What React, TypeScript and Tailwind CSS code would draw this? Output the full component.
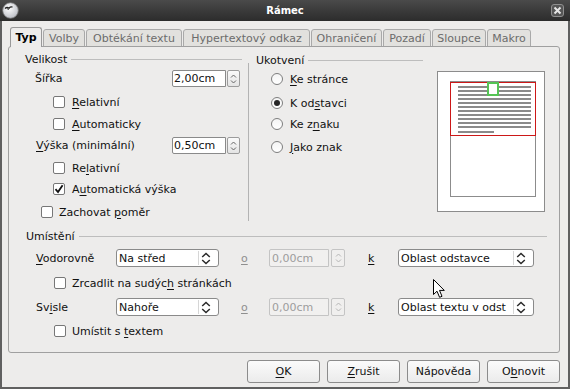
import React from "react";

function U({ children }: { children: React.ReactNode }) {
  return <span className="underline underline-offset-[2px] decoration-1">{children}</span>;
}

function Checkbox({ checked = false }: { checked?: boolean }) {
  return (
    <div className="w-[12px] h-[12px] shrink-0 bg-white border border-[#777777] rounded-[2px] flex items-center justify-center">
      {checked && (
        <svg width="10" height="10" viewBox="0 0 10 10">
          <path d="M1.5 5.2 L4 8 L8.6 1.2" fill="none" stroke="#111" strokeWidth="1.8" />
        </svg>
      )}
    </div>
  );
}

function Radio({ checked = false }: { checked?: boolean }) {
  return (
    <div className="w-[12px] h-[12px] shrink-0 rounded-full bg-gradient-to-b from-[#f4f4f4] to-white border border-[#7e7e7e] flex items-center justify-center">
      {checked && <div className="w-[6px] h-[6px] rounded-full bg-[#262626]" />}
    </div>
  );
}

function SpinArrows({ disabled = false }: { disabled?: boolean }) {
  const c = disabled ? "#b5b5b5" : "#666";
  return (
    <svg width="7" height="12" viewBox="0 0 7 12">
      <path d="M1 4.5 L3.5 2 L6 4.5" fill="none" stroke={c} strokeWidth="1" />
      <path d="M1 7.5 L3.5 10 L6 7.5" fill="none" stroke={c} strokeWidth="1" />
    </svg>
  );
}

function SpinBox({ value }: { value: string }) {
  return (
    <div className="flex h-[17px]">
      <div className="w-[54px] h-full bg-white border border-[#8a8a8a] rounded-l-[2px] flex items-center pl-[1px] leading-none">
        {value}
      </div>
      <div className="ml-[1px] w-[13px] h-full bg-gradient-to-b from-[#fafafa] to-[#e4e4e4] border border-[#9c9c9c] rounded-[2px] flex items-center justify-center">
        <SpinArrows />
      </div>
    </div>
  );
}

function SpinBoxDisabled({ value }: { value: string }) {
  return (
    <div className="flex h-[18px]">
      <div className="w-[60px] h-full bg-[#f1f0ef] border border-[#c4c4c4] rounded-l-[2px] flex items-center pl-[2px] leading-none text-[#9d9d9d]">
        {value}
      </div>
      <div className="ml-[2px] w-[14px] h-full bg-[#f0efee] border border-[#c4c4c4] rounded-[2px] flex items-center justify-center">
        <SpinArrows disabled />
      </div>
    </div>
  );
}

function Chevrons() {
  return (
    <svg width="10" height="13" viewBox="0 0 10 13">
      <path d="M1.2 5 L5 1.5 L8.8 5" fill="none" stroke="#2a2a2a" strokeWidth="1.5" />
      <path d="M1.2 8 L5 11.5 L8.8 8" fill="none" stroke="#2a2a2a" strokeWidth="1.5" />
    </svg>
  );
}

function Select({ text, wide = false }: { text: string; wide?: boolean }) {
  return (
    <div
      className={
        wide
          ? "w-[136px] h-[18px] bg-white border border-[#8a8a8a] rounded-[3px] flex items-center"
          : "w-[103px] h-[18px] bg-white border border-[#8a8a8a] rounded-[3px] flex items-center"
      }
    >
      <div className="flex-1 whitespace-nowrap pl-[2px] leading-none">{text}</div>
      <div className="w-px h-[14px] bg-[#d6d6d6]" />
      <div className="pl-[2px] pr-[7px] flex items-center">
        <Chevrons />
      </div>
    </div>
  );
}

function Header({ label, className }: { label: string; className: string }) {
  return (
    <div className={className}>
      <span className="leading-none whitespace-nowrap">{label}</span>
      <div className="flex-1 ml-[4px] h-px bg-[#bdbdbd]" />
    </div>
  );
}

function CheckRow({ className, checked = false, children }: { className: string; checked?: boolean; children: React.ReactNode }) {
  return (
    <div className={className}>
      <Checkbox checked={checked} />
      <span className="leading-none whitespace-nowrap">{children}</span>
    </div>
  );
}

function RadioRow({ className, checked = false, children }: { className: string; checked?: boolean; children: React.ReactNode }) {
  return (
    <div className={className}>
      <Radio checked={checked} />
      <span className="leading-none whitespace-nowrap">{children}</span>
    </div>
  );
}

function Preview() {
  const lines = Array.from({ length: 11 }, (_, k) => k);
  return (
    <svg width="108" height="141" viewBox="0 0 108 141" className="mt-[24px] shrink-0">
      <rect x="0.5" y="0.5" width="107" height="140" fill="#ffffff" stroke="#8c8c8c" />
      <rect x="13.5" y="10.5" width="85" height="115" fill="#ffffff" stroke="#8c8c8c" />
      {lines.map((k) => (
        <rect key={k} x="21" y={15 + 4 * k} width="73" height="2" fill="#8a8a8a" />
      ))}
      <rect x="21" y="60" width="36" height="2" fill="#8a8a8a" />
      <rect x="13.5" y="11.5" width="85" height="53" fill="none" stroke="#cc1818" />
      <rect x="51" y="12" width="10" height="12" fill="#ffffff" stroke="#55c455" strokeWidth="2" />
    </svg>
  );
}

const tabs: { label: string; cls: string }[] = [
  { label: "Volby", cls: "w-[42px]" },
  { label: "Obtékání textu", cls: "w-[96px]" },
  { label: "Hypertextový odkaz", cls: "w-[127px]" },
  { label: "Ohraničení", cls: "w-[71px]" },
  { label: "Pozadí", cls: "w-[48px]" },
  { label: "Sloupce", cls: "w-[54px]" },
  { label: "Makro", cls: "w-[44px]" },
];

export default function App() {
  return (
    <div className="relative w-[570px] h-[389px] bg-[#edeceb] font-['DejaVu_Sans','Liberation_Sans',sans-serif] text-[11px] text-[#111] overflow-hidden flex flex-col">
      {/* Title bar */}
      <div className="h-[21px] shrink-0 bg-gradient-to-b from-[#4a4a4a] to-[#2c2c2c] grid grid-cols-[1fr_auto_1fr] items-center">
        <div className="pl-[2px] flex items-center">
          <svg width="17" height="17" viewBox="0 0 17 17">
            <defs>
              <radialGradient id="ic" cx="0.4" cy="0.35" r="0.7">
                <stop offset="0" stopColor="#ffffff" />
                <stop offset="1" stopColor="#b9bcc4" />
              </radialGradient>
            </defs>
            <circle cx="8.5" cy="8.5" r="7.8" fill="url(#ic)" stroke="#777" strokeWidth="0.8" />
            <path d="M3 6.5 Q5 4.6 7 6.2 Q8.6 4.4 10.5 5.2" fill="none" stroke="#222" strokeWidth="1.3" />
            <path d="M5.5 6.5 L6.5 8" stroke="#222" strokeWidth="1" />
          </svg>
        </div>
        <div className="text-white font-bold text-[10px] leading-none">Rámec</div>
        <div className="flex justify-end pr-[6px]">
          <svg width="13" height="13" viewBox="0 0 13 13">
            <rect x="0.5" y="0.5" width="12" height="12" rx="2.5" fill="#555555" stroke="#8f8f8f" />
            <path d="M3.5 3.5 L9.5 9.5 M9.5 3.5 L3.5 9.5" stroke="#e6e6e6" strokeWidth="2" />
          </svg>
        </div>
      </div>

      {/* Body */}
      <div className="flex-1 flex flex-col border-x-2 border-b-2 border-[#606060]">
        {/* Tabs */}
        <div className="mt-[6px] ml-[8px] h-[20px] flex items-end gap-[1px]">
          <div className="relative z-10 w-[32px] h-[20px] bg-[#edeceb] border border-b-0 border-[#999999] rounded-t-[3px] flex items-center justify-center font-bold text-black leading-none pb-[1px]">
            Typ
          </div>
          {tabs.map((t) => (
            <div
              key={t.label}
              className={`${t.cls} h-[18px] bg-[#e2e1de] border border-[#a9a9a9] rounded-t-[3px] flex items-center justify-center text-[#6c6c6c] leading-none whitespace-nowrap`}
            >
              {t.label}
            </div>
          ))}
        </div>

        {/* Panel */}
        <div className="-mt-[1px] ml-[6px] mr-[8px] h-[307px] border border-[#a0a0a0] rounded-[3px] flex flex-col">
          {/* Top section */}
          <div className="flex h-[178px]">
            {/* Left: Velikost */}
            <div className="w-[239px] flex flex-col">
              <Header label="Velikost" className="mt-[5px] h-[14px] flex items-center pl-[16px] pr-[6px]" />
              <div className="mt-[4px] h-[17px] flex items-center justify-between pl-[26px] pr-[8px]">
                <span className="leading-none">Šířka</span>
                <SpinBox value="2,00cm" />
              </div>
              <CheckRow className="mt-[7px] h-[16px] flex items-center gap-[7px] pl-[44px]">
                <U>R</U>elativní
              </CheckRow>
              <CheckRow className="mt-[6px] h-[16px] flex items-center gap-[7px] pl-[44px]">
                <U>A</U>utomaticky
              </CheckRow>
              <div className="mt-[5px] h-[17px] flex items-center justify-between pl-[27px] pr-[8px]">
                <span className="leading-none">
                  <U>V</U>ýška (minimální)
                </span>
                <SpinBox value="0,50cm" />
              </div>
              <CheckRow className="mt-[6px] h-[16px] flex items-center gap-[7px] pl-[44px]">
                Re<U>l</U>ativní
              </CheckRow>
              <CheckRow checked className="mt-[5px] h-[16px] flex items-center gap-[7px] pl-[44px]">
                A<U>u</U>tomatická výška
              </CheckRow>
              <CheckRow className="mt-[7px] h-[16px] flex items-center gap-[6px] pl-[32px]">
                Zachovat <U>p</U>oměr
              </CheckRow>
            </div>

            {/* Separator */}
            <div className="w-px h-[158px] mt-[16px] bg-[#b3b3b3]" />

            {/* Right: Ukotvení */}
            <div className="flex-1 flex">
              <div className="w-[188px] flex flex-col">
                <Header label="Ukotvení" className="mt-[6px] h-[14px] flex items-center pl-[7px] pr-[14px]" />
                <RadioRow className="mt-[4px] h-[16px] flex items-center gap-[7px] pl-[22px]">
                  <U>K</U>e stránce
                </RadioRow>
                <RadioRow checked className="mt-[8px] h-[16px] flex items-center gap-[7px] pl-[22px]">
                  K od<U>s</U>tavci
                </RadioRow>
                <RadioRow className="mt-[5px] h-[16px] flex items-center gap-[7px] pl-[22px]">
                  Ke z<U>n</U>aku
                </RadioRow>
                <RadioRow className="mt-[7px] h-[16px] flex items-center gap-[7px] pl-[22px]">
                  <U>J</U>ako znak
                </RadioRow>
              </div>
              <Preview />
            </div>
          </div>

          {/* Bottom section: Umístění */}
          <Header label="Umístění" className="mt-[4px] h-[14px] flex items-center pl-[17px] pr-[12px]" />
          <div className="mt-[6px] h-[18px] flex items-center pl-[27px]">
            <span className="w-[80px] leading-none">
              <U>V</U>odorovně
            </span>
            <Select text="Na střed" />
            <span className="w-[50px] pl-[22px] leading-none text-[#8f8f8f]">
              <U>o</U>
            </span>
            <SpinBoxDisabled value="0,00cm" />
            <span className="w-[53px] pl-[23px] leading-none">
              <U>k</U>
            </span>
            <Select text="Oblast odstavce" wide />
          </div>
          <CheckRow className="mt-[8px] h-[16px] flex items-center gap-[6px] pl-[45px]">
            Zrcadlit na sudýc<U>h</U> stránkách
          </CheckRow>
          <div className="mt-[7px] h-[18px] flex items-center pl-[27px]">
            <span className="w-[80px] leading-none">
              Sv<U>i</U>sle
            </span>
            <Select text="Nahoře" />
            <span className="w-[50px] pl-[22px] leading-none text-[#8f8f8f]">
              <U>o</U>
            </span>
            <SpinBoxDisabled value="0,00cm" />
            <span className="w-[53px] pl-[23px] leading-none">
              <U>k</U>
            </span>
            <Select text="Oblast textu v odst" wide />
          </div>
          <CheckRow className="mt-[7px] h-[16px] flex items-center gap-[6px] pl-[45px]">
            Umístit s <U>t</U>extem
          </CheckRow>
        </div>

        {/* Buttons */}
        <div className="mt-[7px] mr-[8px] flex justify-end gap-[7px]">
          {[
            <>
              <U>O</U>K
            </>,
            <>
              <U>Z</U>rušit
            </>,
            <>Nápověda</>,
            <>
              O<U>b</U>novit
            </>,
          ].map((c, i) => (
            <div
              key={i}
              className="w-[73px] h-[23px] bg-gradient-to-b from-[#fbfbfb] to-[#ebebeb] border border-[#8c8c8c] rounded-[3px] flex items-center justify-center leading-none"
            >
              {c}
            </div>
          ))}
        </div>
      </div>

      {/* Mouse cursor */}
      <svg width="13" height="20" viewBox="0 0 13 20" className="absolute left-[433px] top-[279px]">
        <path d="M0.5 0.5 L0.5 15.5 L4 12.2 L6.6 18.3 L9 17.3 L6.5 11.4 L11.3 11.4 Z" fill="#ffffff" stroke="#000000" strokeWidth="1" />
      </svg>
    </div>
  );
}
